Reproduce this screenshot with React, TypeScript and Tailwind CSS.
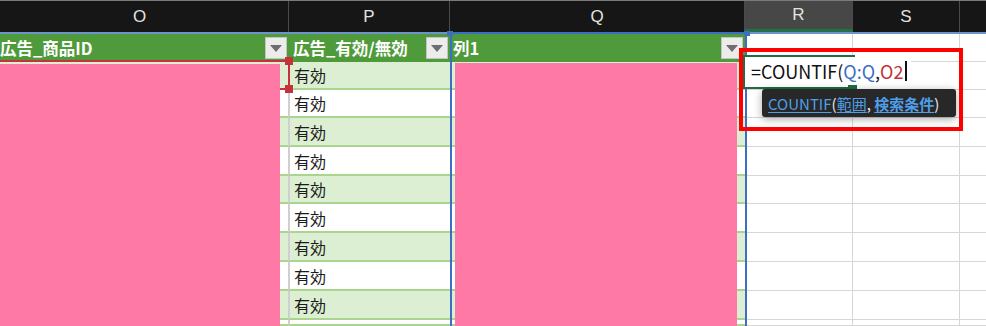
import React from "react";

function Triangle() {
  return (
    <svg width="12" height="7" viewBox="0 0 12 7">
      <polygon points="0,0 12,0 6,7" fill="#6e6e6e" />
    </svg>
  );
}

function Dropdown() {
  return (
    <div className="w-[22px] h-[22px] shrink-0 bg-[#ececec] border border-[#c4c4c4] flex items-center justify-center">
      <Triangle />
    </div>
  );
}

export default function App() {
  const heights = [28, 28, 29, 29, 28, 29, 29, 29, 29, 6];
  return (
    <div className="relative w-[986px] h-[326px] overflow-hidden bg-white font-['Noto_Sans_CJK_JP',sans-serif]">
      {/* column letters */}
      <div className="flex h-[32px] bg-[#161616] border-t border-t-[#7a7a7a] text-[#e2e2e2] text-[17px] font-['Liberation_Sans',sans-serif]">
        <div className="w-[289px] shrink-0 flex items-center justify-center pr-[9px] border-r border-r-[#4a4a4a]">O</div>
        <div className="w-[161px] shrink-0 flex items-center justify-center border-r border-r-[#4a4a4a]">P</div>
        <div className="w-[295px] shrink-0 flex items-center justify-center border-r border-r-[#4a4a4a]">Q</div>
        <div className="w-[108px] shrink-0 flex items-center justify-center bg-[#474747] border-r border-r-[#4a4a4a] border-b-[3px] border-b-[#217346]">R</div>
        <div className="w-[107px] shrink-0 flex items-center justify-center border-r border-r-[#4a4a4a]">S</div>
        <div className="flex-1" />
      </div>
      <div className="h-[2px] bg-[#6d93cd]" />

      {/* row 1: table header */}
      <div className="flex h-[28px]">
        <div className="w-[289px] shrink-0 bg-[#4f9a3b] flex items-center justify-between pr-[2px] text-white font-bold text-[16.5px]">
          <span>広告_商品ID</span>
          <Dropdown />
        </div>
        <div className="w-[161px] shrink-0 bg-[#4f9a3b] flex items-center justify-between pl-[4px] pr-[2px] text-white font-bold text-[16.5px]">
          <span>広告_有効/無効</span>
          <Dropdown />
        </div>
        <div className="w-[295px] shrink-0 bg-[#4f9a3b] flex items-center justify-between pl-[3px] pr-[2px] text-white font-bold text-[16.5px]">
          <span>列1</span>
          <Dropdown />
        </div>
        <div className="w-[108px] shrink-0 border-r border-b border-[#d6d6d6]" />
        <div className="w-[107px] shrink-0 border-r border-b border-[#d6d6d6]" />
        <div className="flex-1 border-b border-[#d6d6d6]" />
      </div>

      {/* data rows */}
      {heights.map((h, i) => {
        const green = i % 2 === 0;
        const bg = green ? "bg-[#dcefd3]" : "bg-white";
        const last = i === heights.length - 1;
        return (
          <div key={i} className="flex overflow-hidden" style={{ height: h }}>
            <div className={`w-[289px] shrink-0 ${bg} border-b-2 border-b-[#a9d58f] border-r border-r-[#cfcfcf]`} />
            <div className={`w-[161px] shrink-0 ${bg} border-b-2 border-b-[#a9d58f] border-l border-l-[#d0d0d0] flex items-center pl-[4px] text-[16px] text-[#1b1b1b]`}>
              {last ? null : "有効"}
            </div>
            <div className={`w-[295px] shrink-0 ${bg} border-b-2 border-b-[#a9d58f]`} />
            <div className="w-[108px] shrink-0 border-r border-b border-[#d6d6d6]" />
            <div className="w-[107px] shrink-0 border-r border-b border-[#d6d6d6]" />
            <div className="flex-1 border-b border-[#d6d6d6]" />
          </div>
        );
      })}

      {/* O2 reference border (red) */}
      <div className="absolute left-[-4px] top-[60px] w-[294px] h-[30px] border-2 border-[#c4323c]" />
      <div className="absolute left-[285px] top-[57px] w-[8px] h-[8px] bg-[#c4323c]" />
      <div className="absolute left-[285px] top-[85px] w-[8px] h-[8px] bg-[#c4323c]" />

      {/* masked (pink) areas */}
      <div className="absolute left-0 top-[64px] w-[280px] h-[270px] bg-[#fe79a6]" />
      <div className="absolute left-[455px] top-[63px] w-[282px] h-[270px] bg-[#fe79a6]" />

      {/* Q:Q reference border (blue) */}
      <div className="absolute left-[450px] top-[32px] w-[297px] h-[300px] border-2 border-b-0 border-[#3b6fc4]" />
      <div className="absolute left-[447px] top-[31px] w-[6px] h-[5px] bg-[#3b6fc4]" />
      <div className="absolute left-[744px] top-[31px] w-[6px] h-[5px] bg-[#3b6fc4]" />

      {/* editing cell */}
      <div className="absolute left-[855px] top-[57px] w-[56px] h-[30px] bg-white" />
      <div className="absolute left-[743px] top-[55px] w-[112px] h-[34px] border-2 border-r-0 border-[#1f6e43] bg-white" />
      <div className="absolute left-[848px] top-[85px] w-[9px] h-[8px] bg-[#1f6e43]" />
      <div className="absolute left-[751px] top-[56px] h-[30px] flex items-center text-[18px] text-[#111] leading-none">
        <span>=COUNTIF(</span>
        <span className="text-[#3b6fc4]">Q:Q</span>
        <span>,</span>
        <span className="text-[#c4323c]">O2</span>
        <span className="inline-block w-[1.5px] h-[20px] bg-[#111] ml-[2px]" />
      </div>

      {/* function tooltip */}
      <div className="absolute left-[762px] top-[89px] w-[194px] h-[28px] bg-[#282828] rounded-[3px] shadow-[0_2px_8px_rgba(0,0,0,0.35)] flex items-center pl-[6px] text-[15px] text-[#e8e8e8] leading-none whitespace-nowrap">
        <span className="text-[#4f9ee8] underline underline-offset-2">COUNTIF</span>
        <span>(</span>
        <span className="text-[#4f9ee8] underline underline-offset-2">範囲</span>
        <span>,&nbsp;</span>
        <span className="text-[#4f9ee8] underline underline-offset-2 font-bold">検索条件</span>
        <span>)</span>
      </div>

      {/* red annotation box */}
      <div className="absolute left-[739px] top-[48px] w-[224px] h-[83px] border-4 border-[#ff0000]" />
    </div>
  );
}
